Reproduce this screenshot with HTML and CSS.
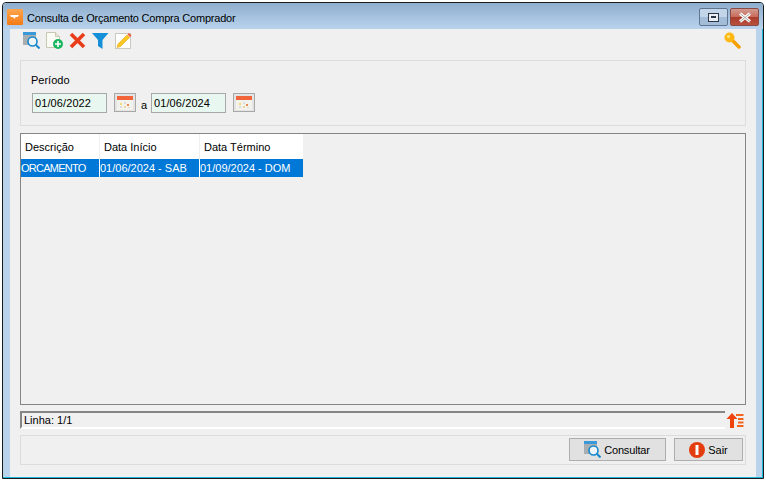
FILE: index.html
```html
<!DOCTYPE html>
<html lang="pt">
<head>
<meta charset="utf-8">
<title>Consulta de Orçamento Compra Comprador</title>
<link rel="stylesheet" href="styles.css">
</head>
<body>
<div class="window">
  <header class="titlebar">
    <span class="app-icon"><svg width="16" height="16" viewBox="0 0 16 16"><defs><linearGradient id="ao" x1="0" y1="0" x2="0" y2="1"><stop offset="0" stop-color="#ffa64d"/><stop offset="1" stop-color="#f47b16"/></linearGradient></defs><rect width="16" height="16" rx="1" fill="url(#ao)"/><path d="M3 6h9l-1.500 2h-2l-1 2-1.500-2H4z" fill="#fff"/></svg></span>
    <span class="title">Consulta de Orçamento Compra Comprador</span>
    <div class="win-controls">
      <span class="win-btn restore"><span class="restore-glyph"></span></span>
      <span class="win-btn close"><svg width="14" height="11" viewBox="0 0 14 11"><path d="M2 1.500l10 8M12 1.500l-10 8" stroke="#fff" stroke-width="3"/><path d="M2 1.500l10 8M12 1.500l-10 8" stroke="#555" stroke-width="1" opacity=".5"/></svg></span>
    </div>
  </header>
  <main class="client">
    <div class="toolbar">
      <div class="tools">
        <svg class="tool" width="17" height="17" viewBox="0 0 17 17"><rect x="0" y="0" width="13" height="3" fill="#3a9ad9"/><rect x="0" y="3" width="13" height="10" fill="#a9aeb3"/><circle cx="9.500" cy="9.500" r="4.500" fill="#eef6fb" stroke="#1688cc" stroke-width="1.600"/><path d="M13 13l3.500 3.500" stroke="#1688cc" stroke-width="2"/></svg>
        <svg class="tool" width="17" height="17" viewBox="0 0 17 17"><path d="M.5.500h9l4 4v11h-13z" fill="#fbfbf6" stroke="#c8c8b0"/><path d="M9.500.500v4h4" fill="#e6e6d8" stroke="#c8c8b0"/><circle cx="12" cy="12" r="5" fill="#19b65f"/><path d="M12 9v6M9 12h6" stroke="#fff" stroke-width="1.600"/></svg>
        <svg class="tool" width="17" height="17" viewBox="0 0 17 17"><path d="M2 2l13 13M15 2L2 15" stroke="#e93c18" stroke-width="3.600"/></svg>
        <svg class="tool" width="17" height="17" viewBox="0 0 17 17"><path d="M0 1h16.500l-6 7v9l-4.500-3V8z" fill="#1590d8"/></svg>
        <svg class="tool" width="17" height="17" viewBox="0 0 17 17"><rect x=".5" y="1.500" width="15" height="15" fill="#fff" stroke="#c9c9c0"/><path d="M3 12l9-9 2.500 2.500-9 9-3.500 1z" fill="#fbc723" stroke="#e8a310" stroke-width=".6"/><path d="M12.500 2.500L14 1l2.500 2.500L15 5z" fill="#ef5b3a"/></svg>
      </div>
      <svg class="key" width="17" height="17" viewBox="0 0 17 17"><path d="M7 7l8 8" stroke="#f59f00" stroke-width="3.500" stroke-linecap="round"/><circle cx="5.500" cy="5.500" r="5" fill="#fdb813"/><circle cx="4.500" cy="4.500" r="1.500" fill="#ffe680"/></svg>
    </div>

    <section class="group period">
      <label class="period-label">Período</label>
      <div class="period-row">
        <span class="date-input">01/06/2022</span>
        <button class="cal-btn"><svg width="18" height="16" viewBox="0 0 18 16"><rect x="1" y="1" width="16" height="4" fill="#f2643a"/><rect x="1" y="5" width="16" height="10" fill="#f4f2ec"/><rect x="4" y="8" width="2" height="2" fill="#f7d770"/><rect x="8" y="11" width="2" height="2" fill="#e9d9a0"/><rect x="11" y="9" width="2" height="2" fill="#f08a50"/><rect x="8" y="7" width="2" height="2" fill="#dcdcdc"/><rect x="4" y="11" width="2" height="2" fill="#dcdcdc"/><rect x="12" y="12" width="2" height="1" fill="#dcdcdc"/></svg></button>
        <span class="a-text">a</span>
        <span class="date-input">01/06/2024</span>
        <button class="cal-btn"><svg width="18" height="16" viewBox="0 0 18 16"><rect x="1" y="1" width="16" height="4" fill="#f2643a"/><rect x="1" y="5" width="16" height="10" fill="#f4f2ec"/><rect x="4" y="8" width="2" height="2" fill="#f7d770"/><rect x="8" y="11" width="2" height="2" fill="#e9d9a0"/><rect x="11" y="9" width="2" height="2" fill="#f08a50"/><rect x="8" y="7" width="2" height="2" fill="#dcdcdc"/><rect x="4" y="11" width="2" height="2" fill="#dcdcdc"/><rect x="12" y="12" width="2" height="1" fill="#dcdcdc"/></svg></button>
      </div>
    </section>

    <section class="grid">
      <div class="grid-row grid-head">
        <span class="col col-1">Descrição</span>
        <span class="col col-2">Data Início</span>
        <span class="col col-3">Data Término</span>
      </div>
      <div class="grid-row grid-sel">
        <span class="col col-1 col-caps">ORCAMENTO</span>
        <span class="col col-2">01/06/2024 - SAB</span>
        <span class="col col-3">01/09/2024 - DOM</span>
      </div>
    </section>

    <div class="status-row">
      <div class="status">Linha: 1/1</div>
      <svg class="sort" width="18" height="17" viewBox="0 0 18 17"><path d="M6 1l5.500 6H8v9H4V7H.5z" fill="#f0440f"/><path d="M10 3h7.500M12 7h5.500M12 10.500h5.500M11 14h6.500" stroke="#f4641e" stroke-width="1.800"/></svg>
    </div>

    <footer class="group actions">
      <button class="btn btn-consult"><svg width="17" height="17" viewBox="0 0 17 17"><rect x="0" y="0" width="13" height="3" fill="#3a9ad9"/><rect x="0" y="3" width="13" height="10" fill="#a9aeb3"/><circle cx="9.500" cy="9.500" r="4.500" fill="#eef6fb" stroke="#1688cc" stroke-width="1.600"/><path d="M13 13l3.500 3.500" stroke="#1688cc" stroke-width="2"/></svg>Consultar</button>
      <button class="btn btn-exit"><svg width="16" height="16" viewBox="0 0 16 16"><circle cx="8" cy="8" r="8" fill="#e43d0f"/><path d="M.5 10.500A8 8 0 0 0 15.500 10.500 8 8 0 0 1 .5 10.500z" fill="#b82a08"/><rect x="6.500" y="3" width="3" height="10" fill="#fff"/></svg>Sair</button>
    </footer>
  </main>
</div>
</body>
</html>
```
FILE: styles.css
```css
* { box-sizing: border-box; }
html, body { margin: 0; padding: 0; background: #fff; }
body {
  width: 766px;
  height: 482px;
  padding: 2px 2px 3px 2px;
  font-family: "Liberation Sans", Tahoma, sans-serif;
  font-size: 11px;
  color: #000;
  overflow: hidden;
}
.window {
  width: 762px;
  height: 477px;
  display: flex;
  flex-direction: column;
  border: 1px solid #1a1a1a;
  border-radius: 4px 4px 0 0;
  background: #b9d3ed;
  padding: 0 7px 1px 7px;
  box-shadow: inset -1px -1px 0 #1fb8dc;
}
.titlebar {
  flex: none;
  height: 26px;
  margin: 0 -7px;
  padding: 5px 4px 0 4px;
  display: flex;
  align-items: flex-start;
  background: linear-gradient(#8eaecd, #b9d3ed);
  border-radius: 3px 3px 0 0;
}
.app-icon { display: block; width: 16px; height: 16px; margin-top: 1px; margin-right: 4px; }
.app-icon svg { display: block; }
.title { font-size: 11px; line-height: 20px; flex: 1; letter-spacing: -0.21px; }
.win-controls { display: flex; gap: 2px; }
.win-btn {
  width: 29px;
  height: 18px;
  display: flex;
  align-items: center;
  justify-content: center;
  border: 1px solid #5f7590;
  border-radius: 2px;
}
.restore { background: linear-gradient(#c3d6e9 50%, #a3bdd8 50%); }
.restore-glyph { width: 11px; height: 9px; border: 1px solid #2c3644; background: #e8eef4; }
.restore-glyph::after { content: ""; display: block; width: 5px; height: 2px; background: #2c3644; margin: 2px auto 0; }
.close { background: linear-gradient(#d19a90 0, #c96a5a 50%, #aa3a2a 50%, #b9513f 100%); border-color: #8a4a45; }
.close svg { display: block; }

.client {
  flex: 1;
  background: #f0f0f0;
  padding: 0 10px;
  display: flex;
  flex-direction: column;
  min-height: 0;
}
.toolbar { flex: none; height: 31px; padding: 3px 5px 0 3px; display: flex; justify-content: space-between; align-items: flex-start; }
.tools { display: flex; gap: 6px; }
.tool, .key, .sort { display: block; }
.group { border: 1px solid #dcdcdc; }
.period { flex: none; height: 66px; padding: 11px 11px 0 11px; }
.period-label { display: block; line-height: 16px; margin: 0 0 5px -1px; }
.period-row { display: flex; align-items: flex-start; }
.date-input {
  width: 75px;
  height: 20px;
  background: #e8f7ef;
  border: 1px solid #a8a8a8;
  line-height: 18px;
  padding-left: 2px;
  letter-spacing: 0.1px;
}
.cal-btn {
  width: 22px;
  height: 19px;
  margin: 0 0 0 7px;
  padding: 0;
  display: flex;
  align-items: center;
  justify-content: center;
  background: #e4e4e4;
  border: 1px solid #a8a8a8;
}
.cal-btn svg { display: block; }
.a-text { width: 15px; padding-left: 5px; line-height: 16px; margin-top: 4px; }

.grid {
  flex: none;
  height: 272px;
  margin-top: 7px;
  border: 1px solid #858585;
  display: flex;
  flex-direction: column;
}
.grid-row { display: flex; flex: none; width: 282px; }
.grid-head { height: 25px; background: #fff; line-height: 26px; }
.grid-head .col { padding-left: 4px; border-right: 1px solid #efefef; }
.grid-sel { height: 18px; background: #0078d7; color: #fff; line-height: 18px; }
.grid-sel .col { border-right: 1px solid #fff; }
.col { display: block; white-space: nowrap; overflow: hidden; }
.col-1 { width: 79px; }
.col-2 { width: 100px; }
.col-3 { width: 103px; border-right: 0 !important; }
.col-caps { letter-spacing: -0.75px; }

.status-row { flex: none; height: 18px; margin-top: 6px; display: flex; align-items: flex-start; }
.status {
  width: 705px;
  height: 18px;
  background: #f0f0f0;
  border-top: 2px solid #858585;
  border-left: 2px solid #858585;
  border-bottom: 2px solid #fff;
  line-height: 15px;
  padding-left: 2px;
}
.sort { margin-left: 1px; margin-top: 1px; }

.actions {
  flex: none;
  height: 30px;
  margin-top: 6px;
  padding: 2px 2px 0 0;
  display: flex;
  justify-content: flex-end;
  gap: 8px;
}
.btn {
  height: 23px;
  display: flex;
  align-items: center;
  justify-content: center;
  gap: 3px;
  background: #e1e1e1;
  border: 1px solid #adadad;
  padding: 0;
  font: inherit;
  color: inherit;
}
.btn svg { display: block; }
.btn-consult { width: 97px; letter-spacing: -0.15px; padding-right: 1px; }
.btn-exit { width: 69px; }
```
